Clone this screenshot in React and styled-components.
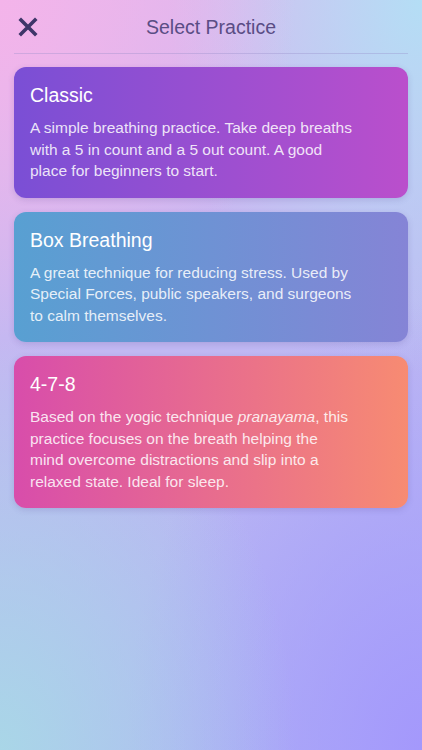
import React from 'react'
import styled, { createGlobalStyle } from 'styled-components'

const Global = createGlobalStyle`
    html, body {
        margin: 0;
        padding: 0;
    }
    body {
        font-family: "Liberation Sans", Arial, sans-serif;
        -webkit-font-smoothing: antialiased;
    }
`

const Screen = styled.div`
    width: 422px;
    height: 750px;
    overflow: hidden;
    background:
        radial-gradient(ellipse 70% 45% at 0% 0%, rgba(244, 180, 234, 1), rgba(244, 180, 234, 0)),
        radial-gradient(ellipse 60% 50% at 100% 0%, rgba(180, 222, 245, 1), rgba(180, 222, 245, 0)),
        radial-gradient(ellipse 70% 55% at 0% 100%, rgba(168, 218, 230, 0.9), rgba(168, 218, 230, 0)),
        radial-gradient(ellipse 70% 60% at 100% 100%, rgba(164, 152, 252, 1), rgba(164, 152, 252, 0)),
        linear-gradient(160deg, #e0b8ee 0%, #c0b8f2 45%, #aeb4f4 100%);
`

const Header = styled.div`
    position: relative;
    display: flex;
    align-items: center;
    justify-content: center;
    height: 53px;
    margin: 0 14px;
    border-bottom: 1px solid rgba(150, 140, 200, 0.35);
`

const Close = styled.button`
    position: absolute;
    left: 2px;
    top: 15px;
    width: 24px;
    height: 24px;
    padding: 0;
    border: 0;
    background: none;
    display: flex;
    align-items: center;
    justify-content: center;
`

const Title = styled.div`
    font-size: 19.5px;
    color: #5a4d85;
    margin-top: 1px;
`

const List = styled.div`
    display: flex;
    flex-direction: column;
    gap: 14px;
    padding: 13px 14px 0;
`

const Card = styled.div`
    border-radius: 12px;
    padding: 16px 16px 16px;
    background: linear-gradient(90deg, ${p => p.from}, ${p => p.to});
    box-shadow: 0 2px 6px rgba(80, 60, 140, 0.18);
    color: #fff;
`

const Name = styled.div`
    font-size: 19.5px;
    line-height: 24px;
    margin-bottom: 10px;
`

const Desc = styled.div`
    font-size: 15.5px;
    line-height: 21.5px;
    color: rgba(255, 255, 255, 0.86);
    white-space: nowrap;

    em {
        font-style: italic;
    }
`

const practices = [
    {
        name: 'Classic',
        from: '#7a4fd5',
        to: '#ba4fcc',
        lines: [
            'A simple breathing practice. Take deep breaths',
            'with a 5 in count and a 5 out count. A good',
            'place for beginners to start.',
        ],
    },
    {
        name: 'Box Breathing',
        from: '#58a0d2',
        to: '#8584d6',
        lines: [
            'A great technique for reducing stress. Used by',
            'Special Forces, public speakers, and surgeons',
            'to calm themselves.',
        ],
    },
    {
        name: '4-7-8',
        from: '#d84dab',
        to: '#f78b72',
        lines: [
            <>Based on the yogic technique <em>pranayama</em>, this</>,
            'practice focuses on the breath helping the',
            'mind overcome distractions and slip into a',
            'relaxed state. Ideal for sleep.',
        ],
    },
]

const App = () => {
    return(
        <Screen>
            <Global />
            <Header>
                <Close aria-label="close">
                    <svg width="20" height="20" viewBox="0 0 20 20">
                        <path d="M3 3 L17 17 M17 3 L3 17" stroke="#3e3669" strokeWidth="3.6" strokeLinecap="square" />
                    </svg>
                </Close>
                <Title>Select Practice</Title>
            </Header>
            <List>
                {practices.map(p => (
                    <Card key={p.name} from={p.from} to={p.to}>
                        <Name>{p.name}</Name>
                        <Desc>
                            {p.lines.map((l, i) => <div key={i}>{l}</div>)}
                        </Desc>
                    </Card>
                ))}
            </List>
        </Screen>
    )
}

export default App
